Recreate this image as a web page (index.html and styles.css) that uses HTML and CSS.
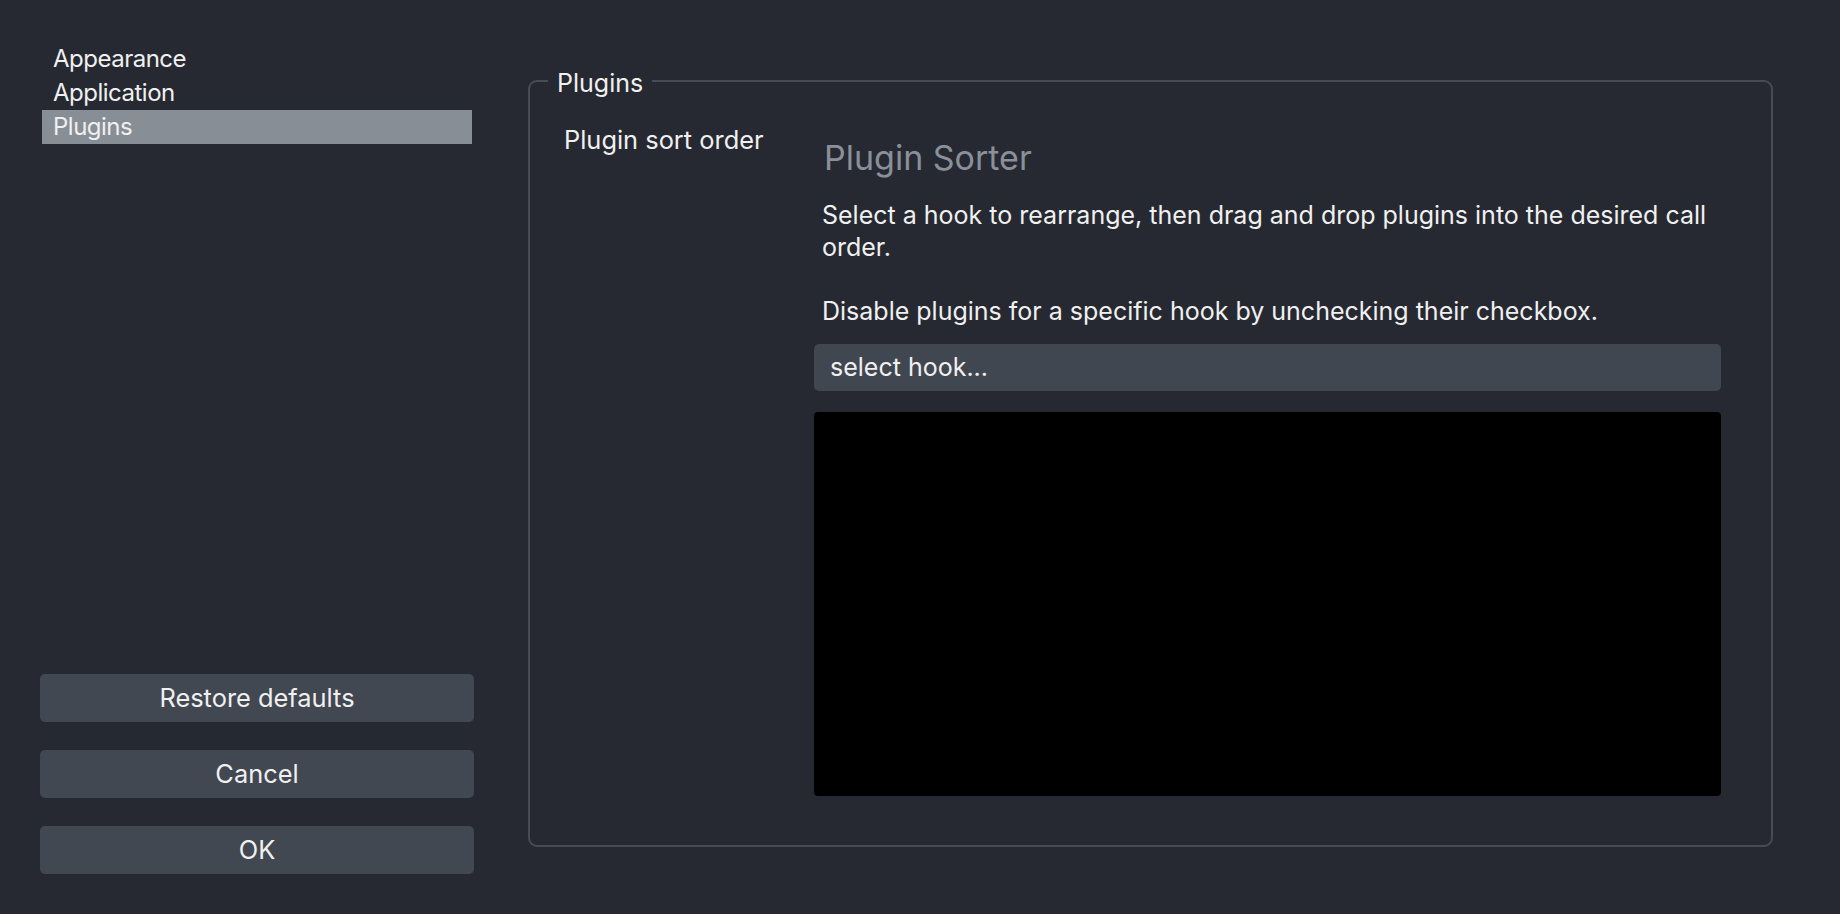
FILE: index.html
```html
<!DOCTYPE html>
<html>
<head>
<meta charset="utf-8">
<link rel="stylesheet" href="styles.css">
</head>
<body>
<div class="sidebar">
  <ul class="nav">
    <li class="nav-item">Appearance</li>
    <li class="nav-item">Application</li>
    <li class="nav-item active">Plugins</li>
  </ul>
  <div class="buttons">
    <div class="btn">Restore defaults</div>
    <div class="btn">Cancel</div>
    <div class="btn">OK</div>
  </div>
</div>
<fieldset class="group">
  <legend class="group-title">Plugins</legend>
  <div class="form">
    <div class="form-label">Plugin sort order</div>
    <div class="form-field">
      <h2 class="sorter-title">Plugin Sorter</h2>
      <p class="sorter-desc">Select a hook to rearrange, then drag and drop plugins into the desired call order.<br><br>Disable plugins for a specific hook by unchecking their checkbox.</p>
      <div class="select">select hook...</div>
      <div class="list"></div>
    </div>
  </div>
</fieldset>
</body>
</html>
```
FILE: styles.css
```css
html, body {
  margin: 0;
  padding: 0;
}
body {
  background: #262931;
  color: #f0f0f0;
  font-family: Inter, "Noto Sans", sans-serif;
  font-size: 25px;
  height: 914px;
  overflow: hidden;
  display: flex;
  align-items: flex-start;
}
.sidebar {
  width: 434px;
  height: 914px;
  box-sizing: border-box;
  margin-left: 40px;
  padding-top: 42px;
  padding-bottom: 40px;
  display: flex;
  flex-direction: column;
  justify-content: space-between;
}
.nav {
  list-style: none;
  margin: 0 2px;
  padding: 0;
  font-size: 24px;
  letter-spacing: -0.5px;
}
.nav-item {
  height: 34px;
  line-height: 34px;
  padding-left: 11px;
}
.nav-item.active {
  background: #888e96;
}
.buttons {
  display: flex;
  flex-direction: column;
  gap: 28px;
}
.btn {
  height: 48px;
  line-height: 48px;
  border-radius: 5px;
  background: #424852;
  text-align: center;
  font-size: 25.4px;
}
.group {
  margin: 65px 0 0 54px;
  width: 1245px;
  height: 782px;
  box-sizing: border-box;
  border: 2px solid #464b54;
  border-radius: 9px;
  padding: 0;
}
.group-title {
  margin-left: 18px;
  padding: 4px 9px 0 9px;
  line-height: 28px;
}
.form {
  display: grid;
  grid-template-columns: 250px 907px;
  padding: 27px 0 0 34px;
}
.form-label {
  line-height: 32px;
  font-size: 25.4px;
}
.form-field {
  display: flex;
  flex-direction: column;
}
.sorter-title {
  margin: 13px 0 0 10px;
  font-size: 34px;
  font-weight: 400;
  line-height: 42px;
  color: #8a9099;
}
.sorter-desc {
  margin: 20px 0 0 8px;
  line-height: 32px;
}
.select {
  margin-top: 17px;
  height: 47px;
  line-height: 47px;
  padding-left: 16px;
  background: #414751;
  border-radius: 5px;
}
.list {
  margin-top: 21px;
  height: 384px;
  background: #000000;
  border-radius: 4px;
}
```
